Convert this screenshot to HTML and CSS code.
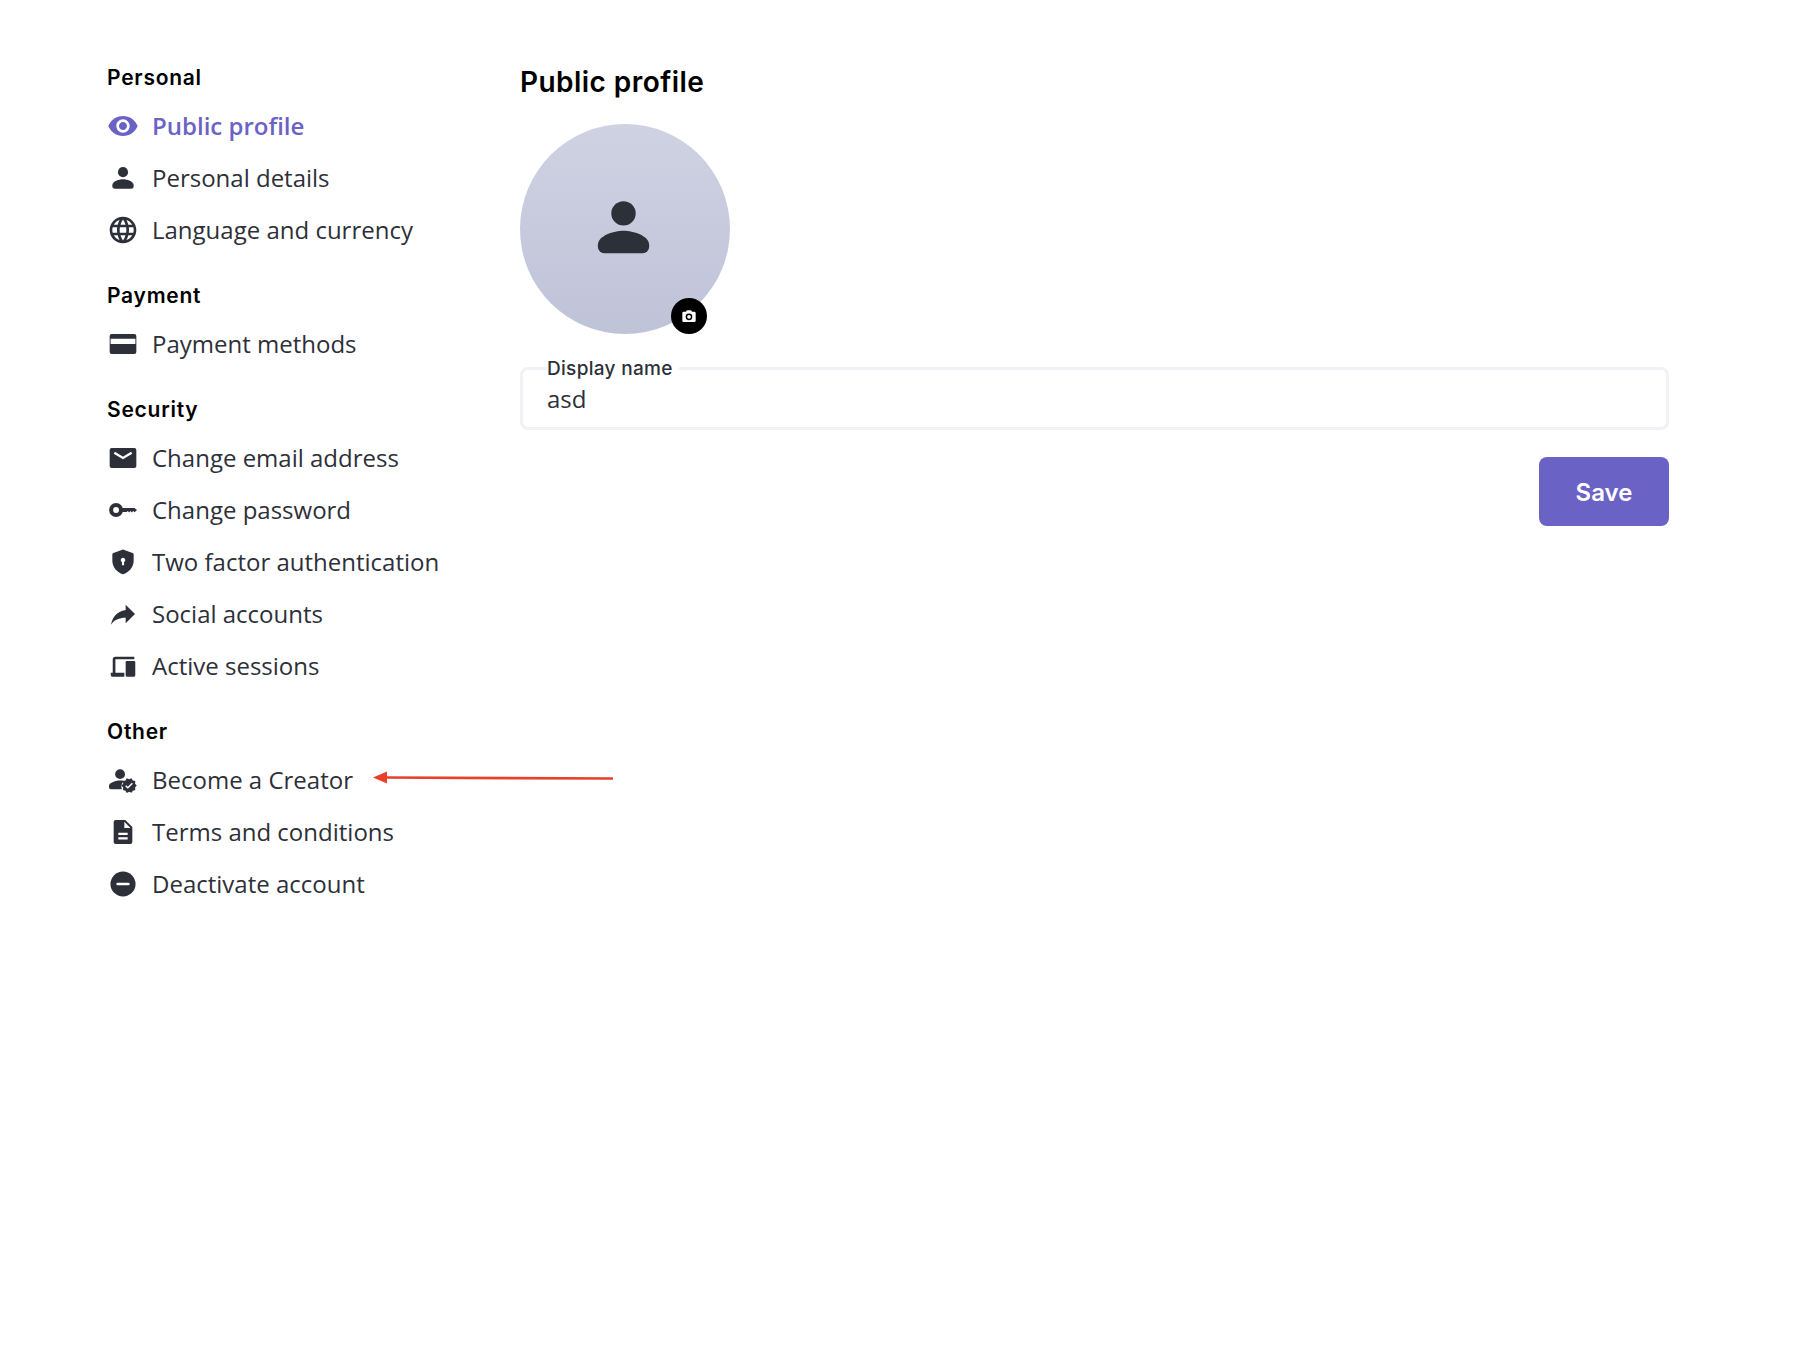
FILE: index.html
```html
<!DOCTYPE html>
<html lang="en">
<head>
<meta charset="utf-8">
<title>Public profile</title>
<link rel="stylesheet" href="styles.css">
</head>
<body>
<div class="page">
  <nav class="sidebar">
    <section class="group">
      <h3 class="group-title">Personal</h3>
      <a class="item active"><svg class="icon" viewBox="0 0 24 24"><path d="M12 4.5C7 4.5 2.73 7.61 1 12c1.73 4.39 6 7.5 11 7.5s9.27-3.11 11-7.5c-1.73-4.39-6-7.5-11-7.5zM12 17c-2.76 0-5-2.24-5-5s2.24-5 5-5 5 2.24 5 5-2.24 5-5 5zm0-8c-1.66 0-3 1.34-3 3s1.34 3 3 3 3-1.34 3-3-1.34-3-3-3z"/></svg>Public profile</a>
      <a class="item"><svg class="icon" viewBox="0 0 24 24"><circle cx="12" cy="7.600" r="3.800"/><path d="M4 17.500c0-3 5-4.500 8-4.500s8 1.500 8 4.500v.5a2 2 0 0 1-2 2H6a2 2 0 0 1-2-2z"/></svg>Personal details</a>
      <a class="item"><svg class="icon" viewBox="0 0 24 24"><path d="M11.990 2C6.470 2 2 6.480 2 12s4.470 10 9.990 10C17.520 22 22 17.520 22 12S17.520 2 11.990 2zm6.930 6h-2.950c-.32-1.250-.78-2.450-1.380-3.560 1.840.63 3.370 1.910 4.330 3.560zM12 4.040c.83 1.200 1.480 2.530 1.910 3.960h-3.820c.43-1.430 1.080-2.760 1.910-3.960zM4.260 14C4.100 13.360 4 12.690 4 12s.1-1.360.26-2h3.380c-.08.66-.14 1.320-.14 2 0 .68.06 1.340.14 2H4.260zm.82 2h2.950c.32 1.250.78 2.450 1.380 3.560-1.840-.63-3.370-1.900-4.330-3.560zm2.950-8H5.080c.96-1.660 2.490-2.930 4.330-3.560C8.810 5.550 8.350 6.750 8.030 8zM12 19.960c-.83-1.200-1.480-2.530-1.910-3.960h3.820c-.43 1.430-1.080 2.760-1.910 3.960zM14.340 14H9.660c-.09-.66-.16-1.320-.16-2 0-.68.07-1.350.16-2h4.680c.09.650.16 1.320.16 2 0 .68-.07 1.340-.16 2zm.25 5.560c.6-1.110 1.060-2.310 1.380-3.560h2.950c-.96 1.650-2.490 2.930-4.330 3.560zM16.360 14c.08-.66.14-1.320.14-2 0-.68-.06-1.340-.14-2h3.380c.16.64.26 1.310.26 2s-.1 1.360-.26 2h-3.380z"/></svg>Language and currency</a>
    </section>
    <section class="group">
      <h3 class="group-title">Payment</h3>
      <a class="item"><svg class="icon" viewBox="0 0 24 24"><path fill-rule="evenodd" d="M3.500 4.500h17A1.500 1.500 0 0 1 22 6v12a1.500 1.500 0 0 1-1.500 1.500h-17A1.500 1.500 0 0 1 2 18V6a1.500 1.500 0 0 1 1.500-1.500zM2.700 8v4h18.600V8z"/></svg>Payment methods</a>
    </section>
    <section class="group">
      <h3 class="group-title">Security</h3>
      <a class="item"><svg class="icon" viewBox="0 0 24 24"><path d="M3.500 4.500h17A1.500 1.500 0 0 1 22 6v12a1.500 1.500 0 0 1-1.500 1.500h-17A1.500 1.500 0 0 1 2 18V6a1.500 1.500 0 0 1 1.500-1.500z"/><path class="cut" d="M5.500 8l6.500 4 6.500-4"/></svg>Change email address</a>
      <a class="item"><svg class="icon" viewBox="0 0 24 24"><circle class="ring" cx="6.800" cy="12" r="3.700"/><path d="M11 10.500h9.600l1.900 1.500-1.800 1.700-1.100-.9-1 1-1-1-1 1-1-1-.8.700H11z"/></svg>Change password</a>
      <a class="item"><svg class="icon" viewBox="0 0 24 24"><path fill-rule="evenodd" d="M12 2.700l7.200 2.600a1.200 1.200 0 0 1 .8 1.100v4.700c0 4.600-3.400 8.900-8 10.100-4.600-1.200-8-5.500-8-10.100V6.400a1.200 1.200 0 0 1 .8-1.100zM12 8.800a1.700 1.700 0 0 0-.8 3.200v2.500h1.600V12a1.700 1.700 0 0 0-.8-3.200z"/></svg>Two factor authentication</a>
      <a class="item"><svg class="icon" viewBox="0 0 24 24"><path d="M14 9V5l7 7-7 7v-4.100c-5 0-8.500 1.600-11 5.100 1-5 4-10 11-11z"/></svg>Social accounts</a>
      <a class="item"><svg class="icon" viewBox="0 0 24 24"><path d="M6.300 5H20.500v2H6.300v10H13v3H4a1.300 1.300 0 0 1-1.200-1.300V17h1.500V7a2 2 0 0 1 2-2z"/><rect x="14" y="8.300" width="7.200" height="11.700" rx=".8"/></svg>Active sessions</a>
    </section>
    <section class="group">
      <h3 class="group-title">Other</h3>
      <a class="item"><svg class="icon" viewBox="0 0 24 24"><circle cx="9.800" cy="7.600" r="3.700"/><path d="M1.500 16.400c0-2.700 5.500-4.100 8.300-4.100 1 0 2 .1 2.900.4a6.300 6.300 0 0 0-1.600 6.200H3a1.500 1.500 0 0 1-1.500-1.500z"/><g transform="translate(16.600 16.200) scale(.52) translate(-12 -12)"><path d="M23 12l-2.440-2.790.34-3.690-3.610-.82-1.890-3.200L12 2.960 8.600 1.500 6.710 4.690 3.100 5.500l.34 3.700L1 12l2.440 2.790-.34 3.700 3.610.82L8.600 22.500l3.400-1.470 3.400 1.460 1.890-3.190 3.610-.82-.34-3.690L23 12zm-12.910 4.720l-3.800-3.810 1.480-1.480 2.320 2.330 5.850-5.870 1.480 1.480-7.330 7.350z"/></g></svg>Become a Creator</a>
      <a class="item"><svg class="icon" viewBox="0 0 24 24"><path fill-rule="evenodd" d="M6.500 3h7.200L19 8.300V19.500a1.500 1.500 0 0 1-1.500 1.500h-11A1.500 1.500 0 0 1 5 19.500v-15A1.500 1.500 0 0 1 6.500 3zM13 4.400V9h4.600zM8.500 12.600v1.700h7v-1.700zM8.500 16v1.700h7V16z"/></svg>Terms and conditions</a>
      <a class="item"><svg class="icon" viewBox="0 0 24 24"><circle cx="12" cy="12" r="9.400"/><rect class="dash" x="7" y="11" width="10" height="2" rx="1"/></svg>Deactivate account</a>
    </section>
  </nav>
  <main class="content">
    <h1 class="title">Public profile</h1>
    <div class="avatar">
      <svg class="avatar-person" viewBox="0 0 24 24"><circle cx="12" cy="7.600" r="3.800"/><path d="M4 17.500c0-3 5-4.500 8-4.500s8 1.500 8 4.500v.5a2 2 0 0 1-2 2H6a2 2 0 0 1-2-2z"/></svg>
      <span class="camera"><svg class="camera-icon" viewBox="0 0 24 24"><path fill-rule="evenodd" d="M9 3.500h6l1.700 2H20a2 2 0 0 1 2 2V19a2 2 0 0 1-2 2H4a2 2 0 0 1-2-2V7.500a2 2 0 0 1 2-2h3.300zM12 8.300a5 5 0 1 0 0 10 5 5 0 0 0 0-10zm0 2.200a2.800 2.800 0 1 1 0 5.600 2.800 2.800 0 0 1 0-5.600z"/></svg></span>
    </div>
    <fieldset class="field">
      <legend class="field-label">Display name</legend>
      <div class="field-value">asd</div>
    </fieldset>
    <div class="actions"><button class="save" type="button">Save</button></div>
  </main>
  <svg class="annotation" viewBox="0 0 240 14"><path class="annotation-line" d="M12 6.500L240 7.500"/><path class="annotation-head" d="M0 6.500L14 .5v12z"/></svg>
</div>
</body>
</html>
```

FILE: styles.css
```css
* { box-sizing: border-box; }
html, body { margin: 0; padding: 0; background: #fff; }
body { font-family: "Open Sans", sans-serif; color: #2d3039; }
.page {
  position: relative;
  width: 1820px;
  height: 1358px;
  display: flex;
  padding: 65px 151px 0 107px;
}
.sidebar { width: 413px; flex: none; }
.group { margin-bottom: 28px; }
.group-title {
  margin: 0 0 8px;
  font: 600 21px/26px Inter, sans-serif;
  letter-spacing: .75px;
  color: #000;
}
.item {
  display: flex;
  align-items: center;
  gap: 13px;
  height: 52px;
  font-size: 24px;
  color: #2d3039;
}
.item.active { color: #6b62c6; font-weight: 600; }
.icon { width: 32px; height: 32px; margin-top: 2px; flex: none; fill: currentColor; }
.cut { fill: none; stroke: #fff; stroke-width: 1.7; }
.ring { fill: none; stroke: currentColor; stroke-width: 3; }
.dash { fill: #fff; }
.content { flex: 1; min-width: 0; }
.title {
  margin: 0 0 25px;
  font: 600 28px/34px Inter, sans-serif;
  letter-spacing: .45px;
  color: #000;
}
.avatar {
  position: relative;
  width: 210px;
  height: 210px;
  border-radius: 50%;
  background: linear-gradient(#cfd2e2, #bfc3d8);
  display: flex;
  align-items: center;
  justify-content: center;
}
.avatar-person { width: 77px; height: 77px; margin: 0 3px 4px 0; fill: #2d3039; }
.camera {
  position: absolute;
  right: 23px;
  bottom: 0;
  width: 36px;
  height: 36px;
  border-radius: 50%;
  background: #000;
  display: flex;
  align-items: center;
  justify-content: center;
}
.camera-icon { width: 16px; height: 16px; fill: #fff; }
.field {
  margin: 25px 0 0;
  padding: 0 24px;
  height: 71px;
  border: 3px solid #f1f1f6;
  border-radius: 8px;
}
.field-label {
  position: relative;
  top: 1px;
  padding: 0 6px 0 0;
  font: 500 19px/18px Inter, sans-serif;
  letter-spacing: .3px;
  color: #2d3039;
}
.field-value { font-size: 24px; line-height: 33px; margin-top: 5px; }
.actions { display: flex; justify-content: flex-end; margin-top: 27px; }
.save {
  width: 130px;
  height: 69px;
  padding: 2px 0 0;
  border: 0;
  border-radius: 8px;
  background: #6b62c6;
  color: #fff;
  font: 600 24px Inter, sans-serif;
}
.annotation { position: absolute; left: 373px; top: 771px; width: 240px; height: 14px; }
.annotation-line { fill: none; stroke: #e8402a; stroke-width: 2.7; }
.annotation-head { fill: #e8402a; }
```
